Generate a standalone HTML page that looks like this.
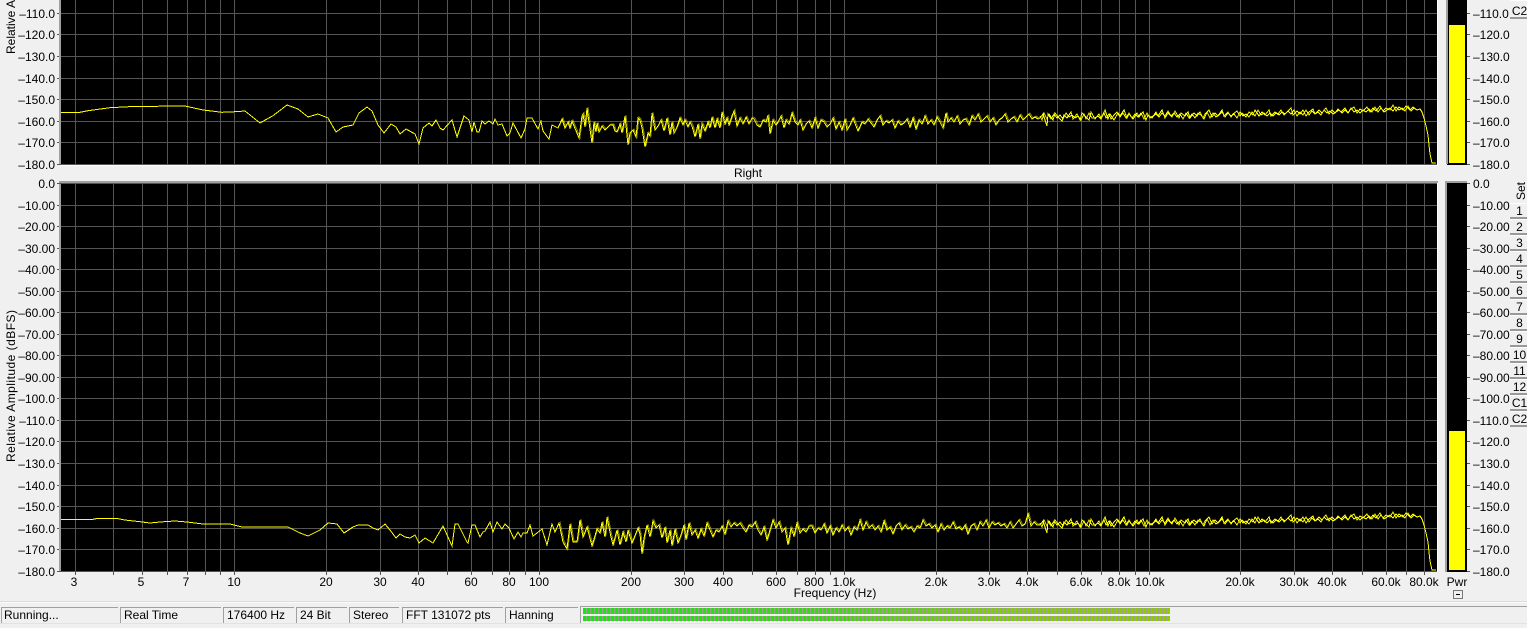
<!DOCTYPE html>
<html><head><meta charset="utf-8"><title>Spectrum</title>
<style>
html,body{margin:0;padding:0;background:#f0f0f0;width:1527px;height:628px;overflow:hidden}
svg{display:block}
text{font:12px "Liberation Sans",Arial,sans-serif;fill:#000}
.r text{text-anchor:end}
.m text{text-anchor:middle}
</style></head><body>
<svg width="1527" height="628" viewBox="0 0 1527 628" xmlns="http://www.w3.org/2000/svg">
<defs>
<linearGradient id="bar" x1="0" x2="1" y1="0" y2="0"><stop offset="0" stop-color="#0cec0c"/><stop offset=".4" stop-color="#30e008"/><stop offset=".72" stop-color="#80d000"/><stop offset="1" stop-color="#90cc00"/></linearGradient>
<pattern id="sep" patternUnits="userSpaceOnUse" x="583" y="0" width="4" height="10"><rect x="3" width="1" height="10" fill="#9aa08a"/></pattern>
<clipPath id="noisy"><rect x="560" y="0" width="862" height="628"/></clipPath>
<polyline id="hi" fill="none" stroke="#ff0" shape-rendering="crispEdges" points="1040,118 1043,114 1045,120 1047,126 1048,114 1051,119 1054,114 1057,118 1060,115 1063,119 1066,113 1069,117 1072,115 1075,118 1078,116 1081,120 1084,114 1086,119 1089,113 1092,118 1095,118 1098,116 1101,119 1104,113 1106,118 1109,114 1111,119 1114,115 1117,112 1120,117 1123,113 1126,118 1129,113 1132,118 1135,114 1138,117 1141,113 1144,119 1147,113 1150,118 1153,116 1156,114 1159,117 1162,113 1165,116 1168,111 1171,116 1174,113 1177,117 1180,114 1183,119 1186,113 1189,118 1192,114 1195,118 1198,113 1201,115 1204,119 1207,112 1210,118 1213,113 1216,117 1219,115 1222,112 1225,117 1228,113 1231,116 1234,114 1237,118 1240,112 1243,116 1246,114 1249,117 1252,112 1255,116 1258,110 1261,115 1264,113 1267,116 1270,113 1273,116 1276,113 1279,115 1282,112 1285,114 1288,111 1291,114 1294,110 1297,116 1300,112 1303,115 1306,110 1309,115 1312,111 1315,114 1318,112 1321,115 1324,110 1327,113 1330,111 1333,114 1336,112 1339,110 1342,113 1345,110 1348,113 1351,108 1354,112 1357,110 1360,113 1363,110 1366,112 1369,109 1372,112 1375,107 1378,112 1381,108 1384,112 1387,110 1390,108 1393,111 1396,107 1399,110 1402,108 1405,111 1408,106 1411,111 1414,108 1417,110 1420,109 1422,112 1424,118 1426,126 1428,135 1429,145 1430,154 1432,163 1436,163"/>
<polyline id="hi2" fill="none" stroke="#ff0" shape-rendering="crispEdges" points="1040,116 1042,120 1044,113 1047,119 1049,114 1053,120 1055,113 1058,117 1062,121 1064,115 1067,118 1071,112 1073,119 1077,114 1080,120 1082,113 1086,117 1089,120 1091,112 1095,119 1099,114 1101,118 1105,110 1108,119 1110,114 1114,120 1118,113 1120,116 1124,110 1127,118 1129,114 1133,119 1137,113 1139,117 1143,112 1146,120 1148,115 1152,118 1156,112 1158,116 1162,110 1165,118 1168,113 1172,117 1175,111 1179,118 1181,113 1185,116 1188,112 1190,118 1194,113 1197,116 1200,112 1203,118 1205,114 1209,110 1212,117 1215,113 1218,116 1222,110 1224,116 1228,112 1231,117 1233,114 1237,111 1240,116 1242,113 1246,117 1249,112 1253,115 1255,110 1259,116 1262,112 1265,115 1269,110 1271,116 1275,112 1278,114 1281,110 1284,115 1287,112 1291,108 1293,115 1297,111 1300,114 1303,110 1306,116 1309,112 1313,109 1315,114 1319,110 1322,113 1326,108 1329,114 1332,110 1335,113 1338,109 1341,112 1345,108 1348,113 1350,110 1354,107 1357,113 1360,109 1363,111 1367,107 1370,112 1373,108 1376,111 1380,106 1383,111 1386,108 1390,110 1393,105 1396,111 1399,107 1403,110 1406,106 1410,110 1413,107 1417,110 1420,109"/>
</defs>
<!-- plots -->
<rect x="60" y="0" width="1377" height="165" fill="#000"/>
<rect x="60" y="183" width="1377" height="389" fill="#000"/>
<path shape-rendering="crispEdges" fill="none" stroke="#555" d="M75.5 0V575M113.5 0V575M142.5 0V575M167.5 0V575M187.5 0V575M205.5 0V575M220.5 0V575M234.5 0V575M326.5 0V575M380.5 0V575M418.5 0V575M447.5 0V575M471.5 0V575M492.5 0V575M509.5 0V575M525.5 0V575M539.5 0V575M631.5 0V575M684.5 0V575M723.5 0V575M752.5 0V575M776.5 0V575M797.5 0V575M815.5 0V575M830.5 0V575M844.5 0V575M936.5 0V575M989.5 0V575M1027.5 0V575M1057.5 0V575M1081.5 0V575M1101.5 0V575M1119.5 0V575M1135.5 0V575M1149.5 0V575M1240.5 0V575M1294.5 0V575M1332.5 0V575M1362.5 0V575M1386.5 0V575M1406.5 0V575M1424.5 0V575"/>
<rect x="0" y="165" width="1445" height="16" fill="#f0f0f0"/>
<rect x="60" y="165" width="1378" height="1" fill="#fff"/>
<rect x="1437" y="0" width="1" height="165" fill="#fff"/>
<rect x="1437" y="183" width="1" height="389" fill="#fff"/>
<rect x="1438" y="0" width="8" height="600" fill="#f0f0f0"/>
<path shape-rendering="crispEdges" fill="none" stroke="#555" d="M57 13.5H1437M57 34.5H1437M57 56.5H1437M57 78.5H1437M57 99.5H1437M57 121.5H1437M57 142.5H1437M57 164.5H1437M57 183.5H1437M57 205.5H1437M57 226.5H1437M57 248.5H1437M57 269.5H1437M57 291.5H1437M57 312.5H1437M57 334.5H1437M57 355.5H1437M57 377.5H1437M57 398.5H1437M57 420.5H1437M57 441.5H1437M57 463.5H1437M57 485.5H1437M57 506.5H1437M57 528.5H1437M57 549.5H1437M57 571.5H1437"/>
<rect x="59" y="0" width="2" height="164" fill="#a0a0a0"/>
<rect x="59" y="184" width="2" height="387" fill="#a0a0a0"/>
<rect x="59" y="181" width="1379" height="2" fill="#a0a0a0"/>
<!-- traces -->
<polyline id="t1" fill="none" stroke="#ff0" shape-rendering="crispEdges" points="61,112.5 79,112.5 88,110.7 110,107.7 133,106.5 185,106 203,110 222,112.3 235,111.7 245,111 260,123 273,115.7 287,105 298,109 308,117 318,114 328,118 336,132 343,127 353,125 359,113 367,107 372,111 378,125 384,133 391,124 396,127 400,134 406,129 415,134 419,144 423,128 429,123 432,126 436,120 440,128 443,130 452,120 457,137 464,116 469,120 472,132 474,122 477,132 479,132 482,121 485,124 489,121 493,124 495,119 498,125 502,124 507,136 510,133 513,123 521,138 525,129 527,118 532,118 538,129 541,121 543,131 549,139 552,125 558,128 562,119 565,128 568,122 570,128 572,121 579,138 582,116 583,114 585,127 587,108 592,143 594,122 596,132 597,123 599,132 602,126 605,130 607,128 610,125 613,125 615,131 617,132 620,124 622,133 625,116 628,145 630,133 633,130 636,137 638,118 640,120 642,128 645,147 648,133 650,136 652,113 655,130 658,126 661,120 664,131 667,118 670,135 672,122 674,133 677,127 680,118 683,125 685,120 688,127 690,122 692,126 695,137 698,124 700,139 702,124 705,131 708,122 710,128 712,117 715,128 717,119 720,128 722,112 725,124 727,118 729,125 732,116 734,111 737,126 740,118 743,124 746,117 749,124 752,118 754,119 757,125 760,127 763,120 766,122 768,115 770,134 773,120 776,125 778,122 781,116 784,128 786,120 789,124 792,113 795,122 798,125 800,120 803,130 806,124 809,121 812,128 815,118 818,128 821,120 824,122 827,127 830,124 833,118 836,129 839,122 842,130 845,119 847,130 850,125 853,118 856,126 858,131 862,122 865,124 868,119 871,123 874,127 877,120 880,116 883,125 886,121 889,123 892,120 895,128 898,121 901,125 904,123 907,119 910,127 913,118 916,129 919,120 922,124 925,116 928,124 931,120 934,125 937,117 940,122 943,128 946,113 948,122 951,118 954,122 957,116 960,124 963,120 966,119 969,125 972,116 975,120 978,114 981,122 984,119 987,116 990,122 993,118 996,125 999,120 1002,118 1005,114 1008,122 1011,119 1014,117 1017,122 1020,115 1023,120 1026,117 1029,114 1032,119 1035,117 1038,119 1040,118"/>
<polyline id="t2" fill="none" stroke="#ff0" shape-rendering="crispEdges" points="61,519.3 93,519.3 97,518.5 117,518.5 125,520 140,521.7 150,523 160,522 175,521 187,522 203,524 230,524 242,527 288,527 300,533 308,536 320,530 328,523 337,524 344,533 353,527 358,525 368,525 373,528 378,530 385,524 390,530 396,538 400,534 405,537 410,538 415,535 419,543 425,538 433,543 443,526 452,546 455,524 458,524 467,542 468,543 472,525 475,525 480,537 483,532 485,531 490,522 493,532 497,522 502,529 505,524 509,528 514,539 518,532 521,537 523,533 527,533 530,525 533,536 537,533 542,529 547,545 552,524 555,532 559,523 563,542 567,549 570,524 573,542 577,542 580,520 583,537 587,527 592,546 597,529 600,533 602,522 605,537 607,517 611,537 613,545 617,530 620,545 623,532 626,542 628,530 632,543 638,528 640,534 642,554 644,538 647,525 650,537 653,521 656,528 659,525 662,538 665,527 667,543 670,530 672,546 675,529 678,543 681,535 684,525 686,540 689,523 692,535 695,530 698,538 701,529 704,536 707,523 710,530 713,537 716,530 719,532 722,526 725,534 728,521 731,527 734,523 737,526 740,523 743,528 746,532 749,525 752,527 755,522 758,530 761,535 764,527 767,540 770,530 773,520 776,528 779,522 782,532 785,528 788,545 791,528 794,536 797,523 800,533 803,529 806,532 809,526 812,526 815,533 818,528 821,530 824,524 827,533 830,526 833,535 836,528 839,532 842,525 845,531 848,527 851,535 854,527 857,530 860,520 863,530 866,522 869,528 872,525 875,530 878,526 881,532 884,521 887,530 890,527 893,534 896,526 899,523 902,530 905,525 908,529 911,527 914,532 917,526 920,528 923,520 926,526 929,524 932,528 935,525 938,532 941,524 944,530 947,526 950,528 953,522 956,529 959,527 962,530 965,525 968,534 971,526 974,524 977,530 980,522 983,526 986,520 989,528 992,522 995,525 998,523 1001,526 1004,524 1007,528 1010,522 1013,528 1016,524 1019,520 1022,526 1025,524 1028,514 1031,526 1034,522 1037,525 1040,525"/>
<use href="#hi"/>
<use href="#hi" transform="translate(0,407)"/>
<use href="#hi2"/>
<use href="#hi2" transform="translate(0,407)"/>
<g clip-path="url(#noisy)" opacity=".5">
<use href="#t1" transform="translate(1,-1)"/>
<use href="#t2" transform="translate(1,-1)"/>
</g>
<!-- meters -->
<rect x="1447" y="0" width="20" height="165" fill="#000"/>
<rect x="1446" y="0" width="2" height="164" fill="#a0a0a0"/>
<rect x="1449" y="25" width="16" height="138" fill="#ff0"/>
<rect x="1447" y="183" width="20" height="389" fill="#000"/>
<rect x="1445" y="181" width="22" height="2" fill="#a0a0a0"/>
<rect x="1445" y="183" width="2" height="389" fill="#a0a0a0"/>
<rect x="1449" y="431" width="16" height="139" fill="#ff0"/>
<path shape-rendering="crispEdges" fill="none" stroke="#555" d="M1467 13.5H1470M1467 34.5H1470M1467 56.5H1470M1467 78.5H1470M1467 99.5H1470M1467 121.5H1470M1467 142.5H1470M1467 164.5H1470M1467 183.5H1470M1467 205.5H1470M1467 226.5H1470M1467 248.5H1470M1467 269.5H1470M1467 291.5H1470M1467 312.5H1470M1467 334.5H1470M1467 355.5H1470M1467 377.5H1470M1467 398.5H1470M1467 420.5H1470M1467 441.5H1470M1467 463.5H1470M1467 485.5H1470M1467 506.5H1470M1467 528.5H1470M1467 549.5H1470M1467 571.5H1470"/>
<!-- left labels -->
<g class="r">
<text x="55" y="18">–110.0</text><text x="55" y="39">–120.0</text><text x="55" y="61">–130.0</text><text x="55" y="83">–140.0</text><text x="55" y="104">–150.0</text><text x="55" y="126">–160.0</text><text x="55" y="147">–170.0</text><text x="55" y="169">–180.0</text>
<text x="55" y="188">0.0</text><text x="55" y="210">–10.00</text><text x="55" y="231">–20.00</text><text x="55" y="253">–30.00</text><text x="55" y="274">–40.00</text><text x="55" y="296">–50.00</text><text x="55" y="317">–60.00</text><text x="55" y="339">–70.00</text><text x="55" y="360">–80.00</text><text x="55" y="382">–90.00</text><text x="55" y="403">–100.0</text><text x="55" y="425">–110.0</text><text x="55" y="446">–120.0</text><text x="55" y="468">–130.0</text><text x="55" y="490">–140.0</text><text x="55" y="511">–150.0</text><text x="55" y="533">–160.0</text><text x="55" y="554">–170.0</text><text x="55" y="576">–180.0</text>
</g>
<!-- right labels -->
<g>
<text x="1473" y="18">–110.0</text><text x="1473" y="39">–120.0</text><text x="1473" y="61">–130.0</text><text x="1473" y="83">–140.0</text><text x="1473" y="104">–150.0</text><text x="1473" y="126">–160.0</text><text x="1473" y="147">–170.0</text><text x="1473" y="169">–180.0</text>
<text x="1473" y="188">0.0</text><text x="1473" y="210">–10.00</text><text x="1473" y="231">–20.00</text><text x="1473" y="253">–30.00</text><text x="1473" y="274">–40.00</text><text x="1473" y="296">–50.00</text><text x="1473" y="317">–60.00</text><text x="1473" y="339">–70.00</text><text x="1473" y="360">–80.00</text><text x="1473" y="382">–90.00</text><text x="1473" y="403">–100.0</text><text x="1473" y="425">–110.0</text><text x="1473" y="446">–120.0</text><text x="1473" y="468">–130.0</text><text x="1473" y="490">–140.0</text><text x="1473" y="511">–150.0</text><text x="1473" y="533">–160.0</text><text x="1473" y="554">–170.0</text><text x="1473" y="576">–180.0</text>
</g>
<!-- axis titles -->
<text transform="translate(15,54) rotate(-90)">Relative Amplitude (dBFS)</text>
<text transform="translate(15,462) rotate(-90)" textLength="152">Relative Amplitude (dBFS)</text>
<g class="m">
<text x="748" y="177">Right</text>
<text x="835" y="597">Frequency (Hz)</text>
<text x="74" y="586">3</text><text x="141" y="586">5</text><text x="186" y="586">7</text><text x="234" y="586">10</text><text x="326" y="586">20</text><text x="380" y="586">30</text><text x="418" y="586">40</text><text x="471" y="586">60</text><text x="509" y="586">80</text><text x="539" y="586">100</text><text x="631" y="586">200</text><text x="684" y="586">300</text><text x="723" y="586">400</text><text x="776" y="586">600</text><text x="814" y="586">800</text><text x="844" y="586">1.0k</text><text x="936" y="586">2.0k</text><text x="989" y="586">3.0k</text><text x="1027" y="586">4.0k</text><text x="1081" y="586">6.0k</text><text x="1119" y="586">8.0k</text><text x="1150" y="586">10.0k</text><text x="1240" y="586">20.0k</text><text x="1294" y="586">30.0k</text><text x="1332" y="586">40.0k</text><text x="1386" y="586">60.0k</text><text x="1424" y="586">80.0k</text>
<text x="1457" y="586">Pwr</text>
</g>
<rect x="1453.5" y="590.5" width="9" height="8" fill="#f0f0f0" stroke="#777" shape-rendering="crispEdges"/>
<rect x="1456" y="594" width="4" height="1" fill="#000"/>
<!-- set buttons -->
<g fill="#fcfcfc"><rect x="1510" y="0" width="17" height="1"/><rect x="1510" y="203" width="17" height="1"/><rect x="1510" y="219" width="17" height="1"/><rect x="1510" y="235" width="17" height="1"/><rect x="1510" y="251" width="17" height="1"/><rect x="1510" y="267" width="17" height="1"/><rect x="1510" y="283" width="17" height="1"/><rect x="1510" y="299" width="17" height="1"/><rect x="1510" y="315" width="17" height="1"/><rect x="1510" y="331" width="17" height="1"/><rect x="1510" y="347" width="17" height="1"/><rect x="1510" y="363" width="17" height="1"/><rect x="1510" y="379" width="17" height="1"/><rect x="1510" y="395" width="17" height="1"/><rect x="1510" y="411" width="17" height="1"/></g>
<g fill="#999"><rect x="1510" y="17" width="17" height="2"/><rect x="1510" y="217" width="17" height="2"/><rect x="1510" y="233" width="17" height="2"/><rect x="1510" y="249" width="17" height="2"/><rect x="1510" y="265" width="17" height="2"/><rect x="1510" y="281" width="17" height="2"/><rect x="1510" y="297" width="17" height="2"/><rect x="1510" y="313" width="17" height="2"/><rect x="1510" y="329" width="17" height="2"/><rect x="1510" y="345" width="17" height="2"/><rect x="1510" y="361" width="17" height="2"/><rect x="1510" y="377" width="17" height="2"/><rect x="1510" y="393" width="17" height="2"/><rect x="1510" y="409" width="17" height="2"/><rect x="1510" y="425" width="17" height="2"/></g>
<text transform="translate(1525,200) rotate(-90)">Set</text>
<g class="m">
<text x="1519.5" y="15">C2</text>
<text x="1519.5" y="215">1</text><text x="1519.5" y="231">2</text><text x="1519.5" y="247">3</text><text x="1519.5" y="263">4</text><text x="1519.5" y="279">5</text><text x="1519.5" y="295">6</text><text x="1519.5" y="311">7</text><text x="1519.5" y="327">8</text><text x="1519.5" y="343">9</text><text x="1519.5" y="359">10</text><text x="1519.5" y="375">11</text><text x="1519.5" y="391">12</text><text x="1519.5" y="407">C1</text><text x="1519.5" y="423">C2</text>
</g>
<!-- status bar -->
<rect x="0" y="601" width="1527" height="1" fill="#dcdcdc"/>
<rect x="0" y="602" width="1527" height="1" fill="#fafafa"/>
<rect x="0" y="623" width="1527" height="1" fill="#e2e2e2"/>
<g shape-rendering="crispEdges" fill="none" stroke="#a0a0a0">
<path d="M1.5 623V607.5H118M120.5 623V607.5H221M223.5 623V607.5H294M296.5 623V607.5H347M349.5 623V607.5H399M402.5 623V607.5H503M505.5 623V607.5H578M580.5 623V606.5H1527"/>
</g>
<text x="4" y="619">Running...</text>
<text x="124" y="619">Real Time</text>
<text x="227" y="619">176400 Hz</text>
<text x="300" y="619">24 Bit</text>
<text x="353" y="619">Stereo</text>
<text x="406" y="619">FFT 131072 pts</text>
<text x="509" y="619">Hanning</text>
<rect x="583" y="608" width="587" height="6" fill="url(#bar)"/>
<rect x="583" y="616" width="587" height="5" fill="url(#bar)"/>
<rect x="583" y="608" width="587" height="6" fill="url(#sep)"/>
<rect x="583" y="616" width="587" height="5" fill="url(#sep)"/>
</svg>
</body></html>
